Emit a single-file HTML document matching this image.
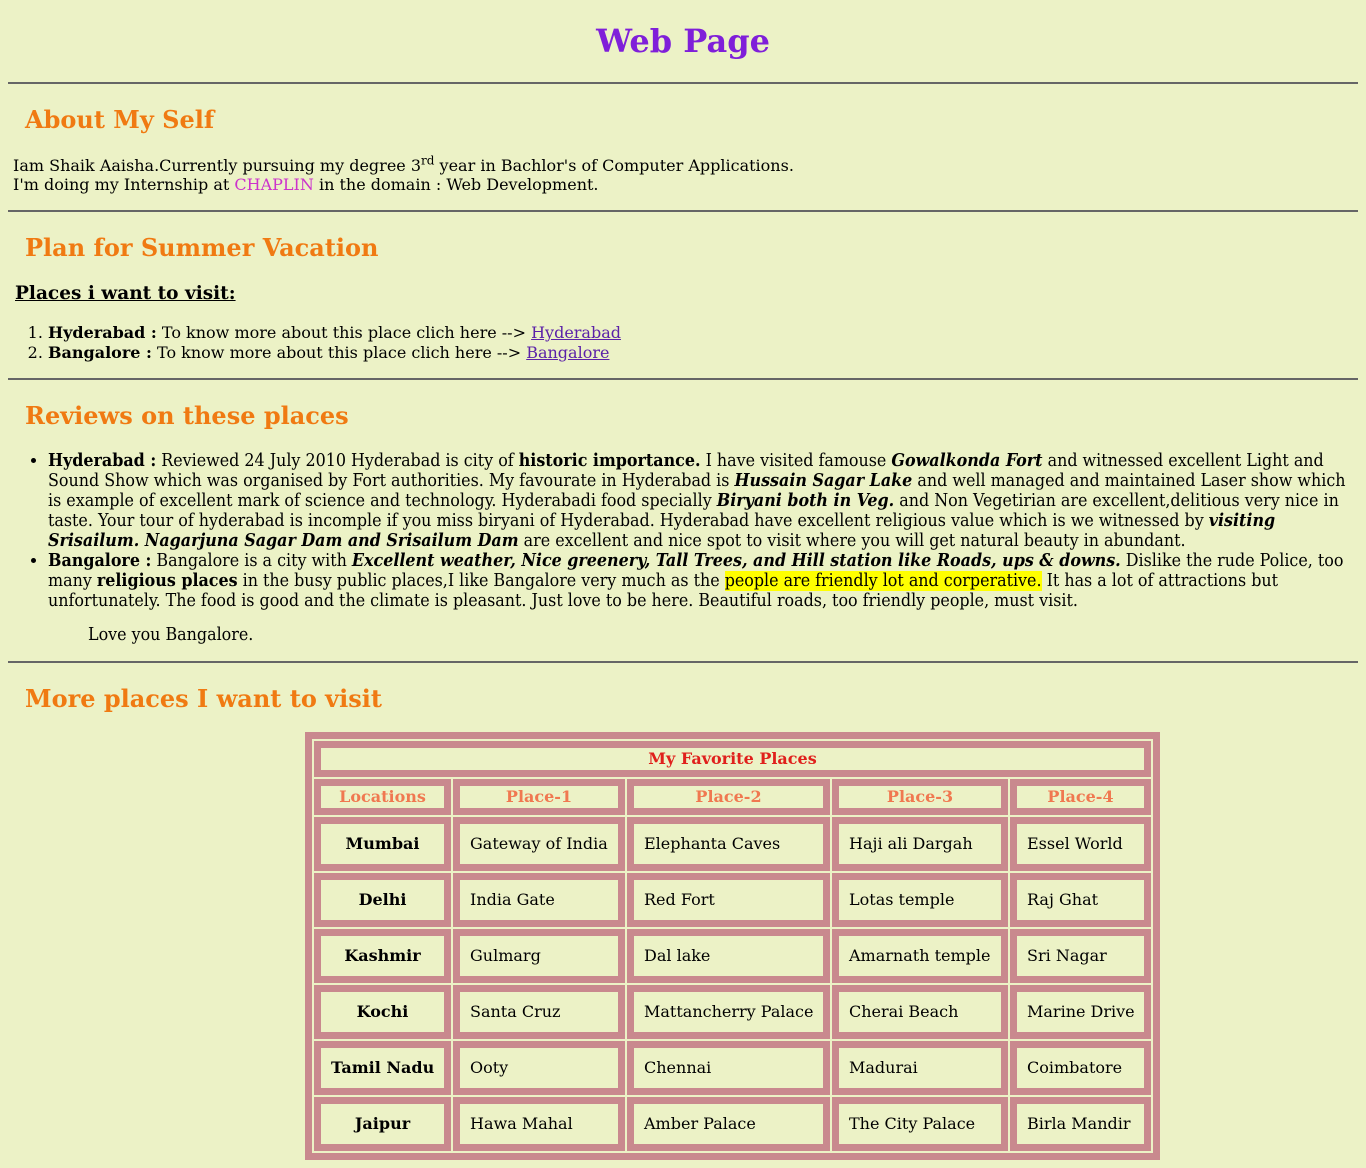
<!DOCTYPE html>
<html><head><meta charset="utf-8">
<style>
body{margin:8px;background:#ecf2c6;font-family:"DejaVu Serif",serif;font-size:16px;color:#000;}
h1{text-align:center;color:#7f1fd9;font-size:32px;margin:21px 0 21px;line-height:40px;}
hr{border:none;border-top:2px solid #666;margin:0;height:0;}
h2{color:#f07a12;font-size:24px;margin:0;padding:22px 0 0 17px;line-height:28px;}
.p1{margin:22px 0 16px 5px;line-height:19px;}
.p1 sup{font-size:12px;line-height:0;}
h3{font-size:18.5px;text-decoration:underline;margin:20px 0 0 7px;line-height:24px;}
ol{margin:17px 0 15px 0;padding-left:40px;line-height:20px;}
a{color:#5b21a8;}
ul.rev{margin:21px 0 0 0;padding-left:40px;line-height:20px;font-size:17.7px;font-family:"DejaVu Serif",serif;font-stretch:condensed;}
.love{margin:14px 0 16px 80px;font-size:17.7px;font-family:"DejaVu Serif",serif;font-stretch:condensed;line-height:20px;}
mark{background:#ffff00;}
table{margin:19px 0 0 297px;border:7px solid #c9898e;border-spacing:2px;border-collapse:separate;table-layout:fixed;width:855px;box-sizing:border-box;}
td,th{border:7px solid #c9898e;padding:9px 10px;white-space:nowrap;box-sizing:border-box;overflow:hidden;}
th{color:#f07850;padding:2px 10px;line-height:18px;}
th.cap{color:#e0201c;}
td{line-height:22px;}
td.loc{font-weight:bold;text-align:center;}
</style></head><body>
<h1>Web Page</h1>
<hr>
<h2>About My Self</h2>
<p class="p1">Iam Shaik Aaisha.Currently pursuing my degree 3<sup>rd</sup> year in Bachlor's of Computer Applications.<br>I'm doing my Internship at <span style="color:#cc33cc">CHAPLIN</span> in the domain : Web Development.</p>
<hr>
<h2>Plan for Summer Vacation</h2>
<h3>Places i want to visit:</h3>
<ol>
<li><b>Hyderabad :</b> To know more about this place clich here --&gt; <a href="#">Hyderabad</a></li>
<li><b>Bangalore :</b> To know more about this place clich here --&gt; <a href="#">Bangalore</a></li>
</ol>
<hr>
<h2>Reviews on these places</h2>
<ul class="rev">
<li><b>Hyderabad :</b> Reviewed 24 July 2010 Hyderabad is city of <b>historic importance.</b> I have visited famouse <b><i>Gowalkonda Fort</i></b> and witnessed excellent Light and Sound Show which was organised by Fort authorities. My favourate in Hyderabad is <b><i>Hussain Sagar Lake</i></b> and well managed and maintained Laser show which is example of excellent mark of science and technology. Hyderabadi food specially <b><i>Biryani both in Veg.</i></b> and Non Vegetirian are excellent,delitious very nice in taste. Your tour of hyderabad is incomple if you miss biryani of Hyderabad. Hyderabad have excellent religious value which is we witnessed by <b><i>visiting Srisailum. Nagarjuna Sagar Dam and Srisailum Dam</i></b> are excellent and nice spot to visit where you will get natural beauty in abundant.</li>
<li><b>Bangalore :</b> Bangalore is a city with <b><i>Excellent weather, Nice greenery, Tall Trees, and Hill station like Roads, ups &amp; downs.</i></b> Dislike the rude Police, too many <b>religious places</b> in the busy public places,I like Bangalore very much as the <mark>people are friendly lot and corperative.</mark> It has a lot of attractions but unfortunately. The food is good and the climate is pleasant. Just love to be here. Beautiful roads, too friendly people, must visit.</li>
</ul>
<p class="love">Love you Bangalore.</p>
<hr>
<h2>More places I want to visit</h2>
<table>
<colgroup><col style="width:137px"><col style="width:172px"><col style="width:203px"><col style="width:176px"><col style="width:141px"></colgroup>
<tr><th colspan="5" class="cap">My Favorite Places</th></tr>
<tr><th>Locations</th><th>Place-1</th><th>Place-2</th><th>Place-3</th><th>Place-4</th></tr>
<tr><td class="loc">Mumbai</td><td>Gateway of India</td><td>Elephanta Caves</td><td>Haji ali Dargah</td><td>Essel World</td></tr>
<tr><td class="loc">Delhi</td><td>India Gate</td><td>Red Fort</td><td>Lotas temple</td><td>Raj Ghat</td></tr>
<tr><td class="loc">Kashmir</td><td>Gulmarg</td><td>Dal lake</td><td>Amarnath temple</td><td>Sri Nagar</td></tr>
<tr><td class="loc">Kochi</td><td>Santa Cruz</td><td>Mattancherry Palace</td><td>Cherai Beach</td><td>Marine Drive</td></tr>
<tr><td class="loc">Tamil Nadu</td><td>Ooty</td><td>Chennai</td><td>Madurai</td><td>Coimbatore</td></tr>
<tr><td class="loc">Jaipur</td><td>Hawa Mahal</td><td>Amber Palace</td><td>The City Palace</td><td>Birla Mandir</td></tr>
</table>
</body></html>
